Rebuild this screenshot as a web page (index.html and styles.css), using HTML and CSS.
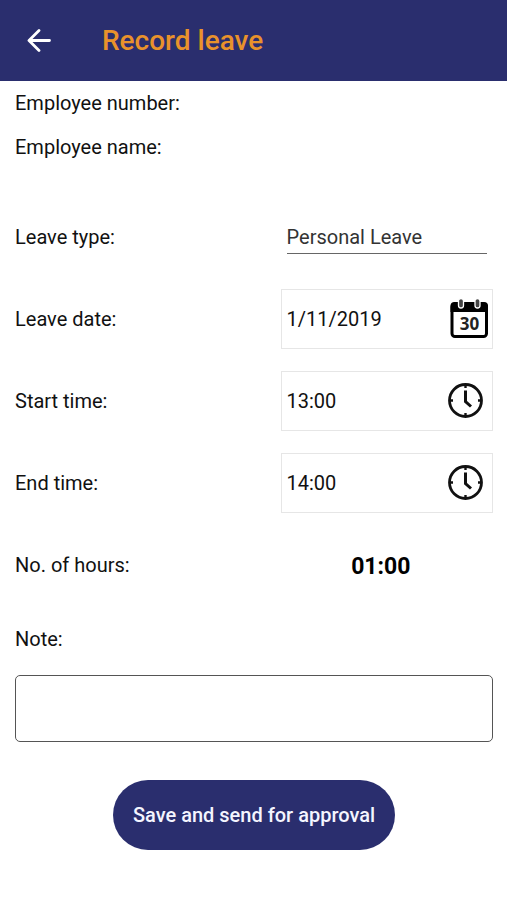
FILE: index.html
```html
<!DOCTYPE html>
<html lang="en">
<head>
<meta charset="utf-8">
<meta name="viewport" content="width=device-width, initial-scale=1">
<title>Record leave</title>
<link rel="stylesheet" href="styles.css">
</head>
<body>
<header class="app-bar">
  <button class="back" type="button" aria-label="Back">
    <svg width="24" height="24" viewBox="0 0 24 24" fill="none" stroke="currentColor" stroke-width="2.8" stroke-linecap="round" stroke-linejoin="round"><path d="M22.500 11.500H2.500M12 1.500 2 11.500l10 10"/></svg>
  </button>
  <h1 class="title">Record leave</h1>
</header>
<form class="form">
  <div class="employee">
    <p class="info">Employee number:</p>
    <p class="info">Employee name:</p>
  </div>
  <div class="rows">
    <div class="row">
      <label for="type">Leave type:</label>
      <select class="type" id="type"><option>Personal Leave</option></select>
    </div>
    <div class="row">
      <label for="date">Leave date:</label>
      <div class="field field-date">
        <input id="date" type="text" value="1/11/2019">
        <button class="pick" type="button" aria-label="Choose date">
          <svg width="38" height="40" viewBox="0 0 38 40">
            <rect x="2" y="5" width="34.500" height="32.500" rx="3" fill="#fff" stroke="#000" stroke-width="3"/>
            <path d="M.5 13V7q0-4 4-4H34q4 0 4 4v6z" fill="#000"/>
            <rect x="8.500" y="-.5" width="5" height="9.500" rx="2.500" fill="#444" stroke="#fff" stroke-width="1.300"/>
            <rect x="25" y="-.5" width="5" height="9.500" rx="2.500" fill="#444" stroke="#fff" stroke-width="1.300"/>
            <text class="day" x="19.500" y="31" text-anchor="middle">30</text>
          </svg>
        </button>
      </div>
    </div>
    <div class="row">
      <label for="start">Start time:</label>
      <div class="field">
        <input id="start" type="text" value="13:00">
        <button class="pick" type="button" aria-label="Choose start time">
          <svg width="36" height="36" viewBox="0 0 36 36" fill="none" stroke="#111"><circle cx="18.500" cy="17.500" r="16" stroke-width="2.800"/><path d="M18.500 2v3M18.500 30v3M3 17.500h3M31 17.500h3" stroke-width="2.400"/><path d="M18.500 7.500v11l5.500 5" stroke-width="3"/></svg>
        </button>
      </div>
    </div>
    <div class="row">
      <label for="end">End time:</label>
      <div class="field">
        <input id="end" type="text" value="14:00">
        <button class="pick" type="button" aria-label="Choose end time">
          <svg width="36" height="36" viewBox="0 0 36 36" fill="none" stroke="#111"><circle cx="18.500" cy="17.500" r="16" stroke-width="2.800"/><path d="M18.500 2v3M18.500 30v3M3 17.500h3M31 17.500h3" stroke-width="2.400"/><path d="M18.500 7.500v11l5.500 5" stroke-width="3"/></svg>
        </button>
      </div>
    </div>
    <div class="row">
      <label for="hours">No. of hours:</label>
      <output class="hours" id="hours">01:00</output>
    </div>
  </div>
  <label class="note-label" for="note">Note:</label>
  <textarea class="note" id="note"></textarea>
  <button class="save" type="submit">Save and send for approval</button>
</form>
</body>
</html>
```
FILE: styles.css
```css
* { box-sizing: border-box; }

body {
  margin: 0;
  background: #fff;
  color: #111;
  font: 20px/24px Roboto, sans-serif;
}

button, input, select, textarea {
  margin: 0;
  padding: 0;
  border: 0;
  background: none;
  color: inherit;
  font: inherit;
}

svg { display: block; }

.pick svg { overflow: visible; }

.app-bar {
  display: flex;
  align-items: center;
  gap: 48px;
  height: 81px;
  padding: 0 24px;
  background: #2a2e6e;
}

.back {
  padding: 3px;
  color: #fff;
}

.title {
  margin: 0;
  color: #e9922b;
  font-size: 28px;
  font-weight: 500;
  line-height: 32px;
}

.form {
  display: flex;
  flex-direction: column;
  padding: 0 14px 24px 15px;
}

.employee { margin-bottom: 38px; }

.info {
  margin: 0;
  line-height: 44px;
}

.rows {
  display: grid;
  gap: 22px;
}

.row {
  display: grid;
  grid-template-columns: minmax(0, 5fr) minmax(0, 4fr);
  align-items: center;
  height: 60px;
}

.type {
  height: 34px;
  margin: 0 6px;
  border-bottom: 1px solid #666;
  border-radius: 0;
  color: #333;
  appearance: none;
}

.field {
  display: flex;
  align-items: center;
  height: 60px;
  padding: 0 9px 0 5px;
  border: 1px solid #e6e6e6;
}

.field-date { padding-right: 4px; }

.field input {
  flex: 1;
  min-width: 0;
}

.day {
  font: bold 17px "Open Sans", sans-serif;
  fill: #222;
}

.hours {
  padding: 4px 12px 0 0;
  color: #000;
  font-size: 23px;
  font-weight: 700;
  text-align: center;
}

.note-label { margin: 32px 0 24px; }

.note {
  height: 67px;
  padding: 8px;
  border: 1px solid #555;
  border-radius: 5px;
  resize: none;
}

.save {
  align-self: center;
  height: 70px;
  margin-top: 38px;
  padding: 0 20px;
  border-radius: 35px;
  background: #2a2e6e;
  color: #f4f5ff;
  font-weight: 500;
}
```
